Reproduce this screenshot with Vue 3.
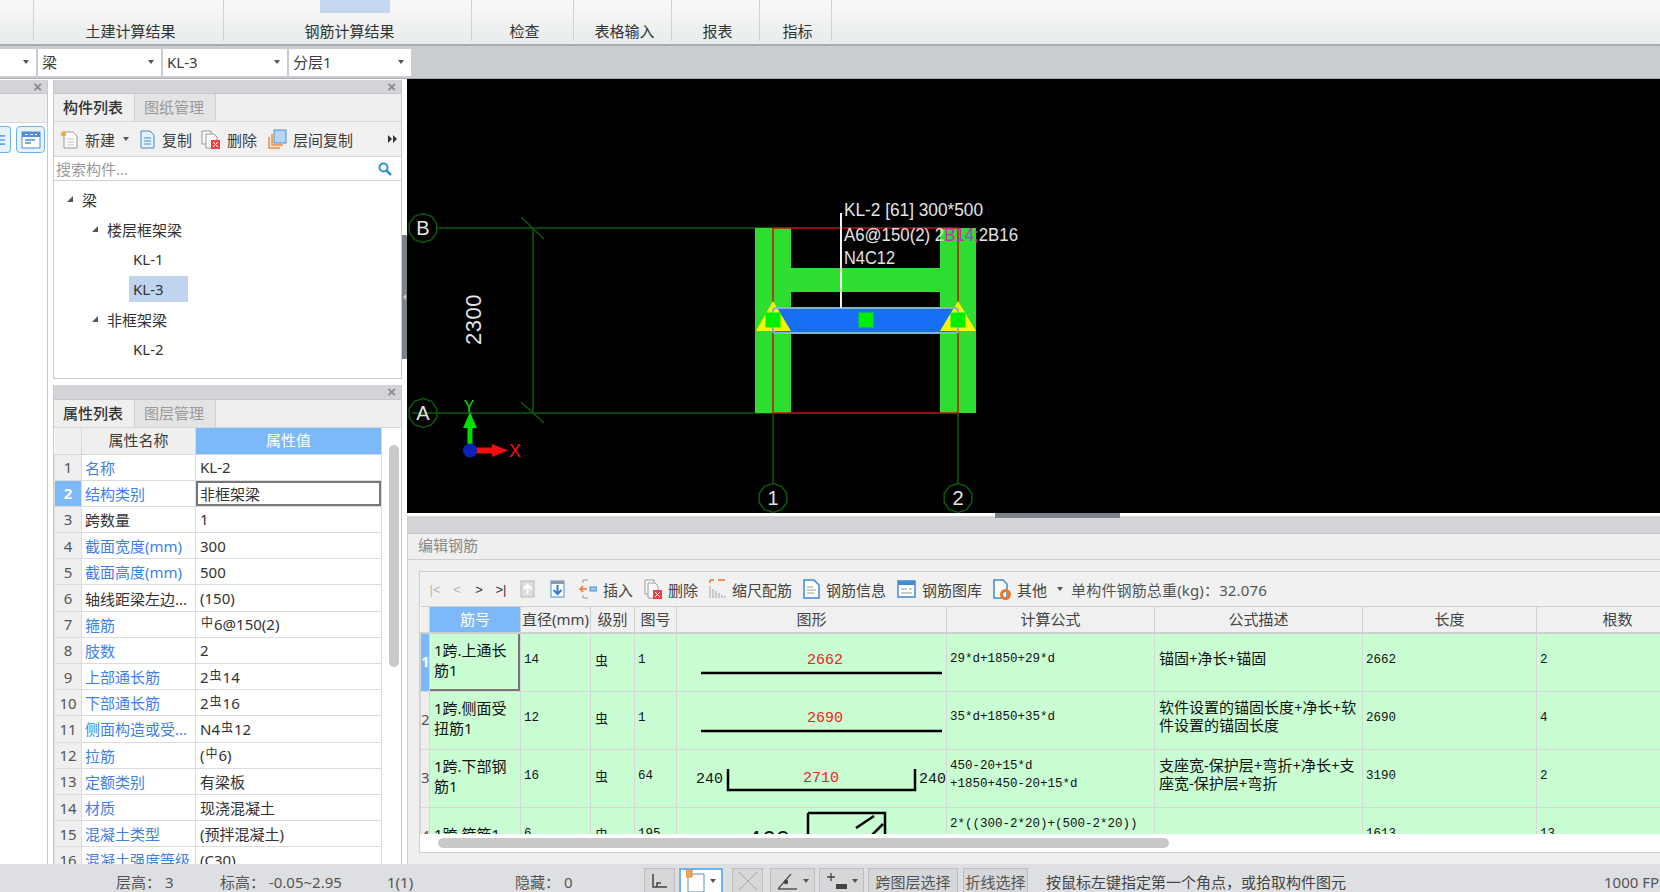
<template>
  <div class="app">
    <div class="ribbon">
      <div v-for="s in ribbon" :key="s.id" class="rib-sec" :style="{ width: s.w + 'px' }">
        <div v-if="s.mark" class="rib-mark"></div>
        <span class="rib-label">{{ s.label }}</span>
      </div>
    </div>

    <div class="selectors">
      <div v-for="d in dropdowns" :key="d.id" class="combo" :style="{ width: d.w + 'px' }">
        <span>{{ d.text }}</span><i class="caret"></i>
      </div>
    </div>

    <div class="main">
      <!-- collapsed left dock -->
      <div class="stub">
        <div class="dock-title"><span class="close">×</span></div>
        <div class="stub-strip"></div>
        <div class="stub-tools">
          <div class="stub-btn cut">
            <svg width="12" height="16" viewBox="0 0 12 16"><path d="M0 3h6M0 8h6M0 13h6" stroke="#5aa6ee" stroke-width="2" fill="none"/></svg>
          </div>
          <div class="stub-btn">
            <svg width="20" height="18" viewBox="0 0 20 18"><rect x="1" y="1" width="18" height="16" fill="#fff" stroke="#4c8fd6"/><rect x="1" y="1" width="18" height="5" fill="#4c8fd6"/><path d="M4 3.500h3M9 3.500h3M14 3.500h2" stroke="#fff"/><path d="M4 9h10M4 12h6" stroke="#4c8fd6" stroke-width="1.500"/></svg>
          </div>
        </div>
      </div>

      <div class="left">
        <section class="panel panel-list">
          <div class="dock-title"><span class="close">×</span></div>
          <div class="tabs">
            <div class="tab on">构件列表</div>
            <div class="tab">图纸管理</div>
          </div>
          <div class="list-tools">
            <div class="tool t-new">
              <svg width="19" height="19" viewBox="0 0 19 19"><path d="M4 2h9l4 4v12H4z" fill="#fbfbfb" stroke="#9a9a9a"/><path d="M7 9h7M7 12h7M7 15h7" stroke="#c8c8c8"/><path d="M3.500 0.500l1 2 2-.5-1 2 1 2-2-.5-1 2-1-2-2 .5 1-2-1-2 2 .5z" fill="#f5a623"/></svg>
              <span>新建</span><i class="caret"></i>
            </div>
            <div class="tool t-copy">
              <svg width="17" height="19" viewBox="0 0 17 19"><path d="M2 1h9l4 4v13H2z" fill="#e7f1fb" stroke="#3f8bd6"/><path d="M5 8h7M5 11h7M5 14h7" stroke="#3f8bd6"/></svg>
              <span>复制</span>
            </div>
            <div class="tool t-del">
              <svg width="20" height="19" viewBox="0 0 20 19"><path d="M1 1h9v13H1z" fill="#fafafa" stroke="#9a9a9a"/><path d="M5 4h8l3 3v11H5z" fill="#fbfbfb" stroke="#9a9a9a"/><rect x="10" y="10" width="9" height="9" fill="#e04646"/><path d="M12 12l5 5M17 12l-5 5" stroke="#fff"/></svg>
              <span>删除</span>
            </div>
            <div class="tool t-floor">
              <svg width="19" height="20" viewBox="0 0 19 20"><rect x="6" y="1" width="12" height="13" fill="#b6d5f7" stroke="#4c8fd6"/><path d="M4 5v11h11M1 8v11h11" fill="none" stroke="#f0883a" stroke-width="1.500"/></svg>
              <span>层间复制</span>
            </div>
            <svg class="more" width="10" height="8" viewBox="0 0 10 8"><path d="M0 0l4 4-4 4zM5 0l4 4-4 4z" fill="#333"/></svg>
          </div>
          <div class="search">
            <span>搜索构件...</span>
            <svg width="14" height="14" viewBox="0 0 14 14"><circle cx="5.500" cy="5.500" r="4" fill="none" stroke="#2f93d1" stroke-width="2"/><path d="M8.500 8.500l4.500 4.500" stroke="#2f93d1" stroke-width="2.500"/></svg>
          </div>
          <ul class="tree">
            <li v-for="n in tree" :key="n.id" class="node" :class="'lv' + n.level">
              <i v-if="n.open" class="open-mark"></i>
              <span :class="{ picked: n.picked }">{{ n.text }}</span>
            </li>
          </ul>
        </section>

        <section class="panel panel-props">
          <div class="dock-title"><span class="close">×</span></div>
          <div class="tabs">
            <div class="tab on">属性列表</div>
            <div class="tab">图层管理</div>
          </div>
          <div class="props-wrap">
            <table class="props">
              <colgroup><col style="width:27px" /><col style="width:114px" /><col style="width:186px" /></colgroup>
              <thead>
                <tr><th></th><th>属性名称</th><th class="hot">属性值</th></tr>
              </thead>
              <tbody>
                <tr v-for="r in props" :key="r.n">
                  <td class="num" :class="{ hot: r.active }">{{ r.n }}</td>
                  <td class="name" :class="{ blue: r.blue }">{{ r.label }}</td>
                  <td class="val" :class="{ editing: r.active }">{{ r.pre }}<span v-if="r.sym" class="sym">{{ r.sym }}</span>{{ r.post }}</td>
                </tr>
              </tbody>
            </table>
            <div class="vscroll"><div class="vthumb"></div></div>
          </div>
        </section>
      </div>

      <div class="vsash">
        <div class="vsash-grip"><i></i></div>
      </div>

      <div class="right">
        <svg class="canvas" width="1253" height="434" viewBox="407 79 1253 434">
          <rect x="407" y="79" width="1253" height="434" fill="#000" />
          <!-- axis lines -->
          <g stroke="#0b5a0b" stroke-width="1.500" fill="none">
            <path d="M437 228H773M412 413H773M773 228V484M958 228V484" />
            <path d="M533 228V413M521 217L544 239M521 402L544 423" />
            <polygon v-for="a in axes" :key="a.t" :points="a.points" />
          </g>
          <!-- columns and beam -->
          <g fill="#2ddd2f">
            <rect x="755" y="228" width="36" height="185" />
            <rect x="940" y="228" width="36" height="185" />
            <rect x="791" y="268" width="149" height="24" />
          </g>
          <rect x="773" y="228" width="185" height="185" fill="none" stroke="#c81212" stroke-width="1.500" />
          <rect x="773" y="308" width="185" height="25" fill="#166ff5" />
          <polygon points="773,301 756,331 791,331" fill="#f5f500" />
          <polygon points="958,301 940,331 976,331" fill="#f5f500" />
          <rect x="773" y="308" width="185" height="25" rx="3" fill="none" stroke="#85aee2" stroke-width="2" />
          <rect x="765.500" y="312.500" width="15" height="15" fill="#00ee00" />
          <rect x="858.500" y="312.500" width="15" height="15" fill="#00ee00" />
          <rect x="950.500" y="312.500" width="15" height="15" fill="#00ee00" />
          <path d="M841 213V308" stroke="#f2f2f2" stroke-width="2" />
          <!-- texts -->
          <g class="cad" fill="#e4e4e4">
            <text x="844" y="216" font-size="18" textLength="139" lengthAdjust="spacingAndGlyphs">KL-2 [61] 300*500</text>
            <text x="844" y="241" font-size="18" textLength="174" lengthAdjust="spacingAndGlyphs">A6@150(2) 2<tspan fill="#d326c8">B14;</tspan>2B16</text>
            <text x="844" y="264" font-size="18" textLength="51" lengthAdjust="spacingAndGlyphs">N4C12</text>
            <text transform="translate(481 345) rotate(-90)" font-size="22" letter-spacing="0.500">2300</text>
            <text v-for="a in axes" :key="a.t" :x="a.x" :y="a.y + 7" font-size="20" text-anchor="middle">{{ a.t }}</text>
          </g>
          <!-- origin gizmo -->
          <path d="M470 450V425" stroke="#00e000" stroke-width="5" />
          <polygon points="470,412 463,428 477,428" fill="#00e000" />
          <path d="M470 450.500H495" stroke="#f01010" stroke-width="6" />
          <polygon points="508,450.500 492,444 492,457" fill="#f01010" />
          <ellipse cx="470" cy="450.500" rx="7" ry="7" fill="#0b22b8" />
          <text class="cad" x="469" y="412" font-size="16" fill="#00e000" text-anchor="middle">Y</text>
          <text class="cad" x="515" y="457" font-size="18" fill="#f01010" text-anchor="middle">X</text>
        </svg>

        <div class="hsash"><div class="hsash-grip"></div></div>

        <section class="edit">
          <div class="edit-title">编辑钢筋</div>
          <div class="edit-body">
            <div class="grid-box">
              <div class="grid-tools">
                <span class="nav off first">|&lt;</span>
                <span class="nav off">&lt;</span>
                <span class="nav">&gt;</span>
                <span class="nav last">&gt;|</span>
                <svg class="t-up" width="15" height="18" viewBox="0 0 15 18"><rect x="1" y="1" width="13" height="16" fill="#ddd" stroke="#b8b8b8"/><path d="M7.500 5v9M3.500 9l4-4 4 4" stroke="#fff" stroke-width="2" fill="none"/></svg>
                <svg class="t-down" width="15" height="18" viewBox="0 0 15 18"><rect x="1" y="1" width="13" height="16" fill="#fff" stroke="#4c8fd6"/><rect x="1" y="1" width="13" height="3" fill="#8a9bb0"/><path d="M7.500 5v9M3.500 10l4 4 4-4" stroke="#2c7fd6" stroke-width="2" fill="none"/></svg>
                <div class="tool t-ins">
                  <svg width="18" height="20" viewBox="0 0 18 20"><path d="M4 1h5M4 1v3M4 19h5M4 19v-3" stroke="#9a9a9a" fill="none"/><path d="M1 10h7M4 7l-3 3 3 3" stroke="#f0762a" stroke-width="1.500" fill="none"/><rect x="11" y="8" width="7" height="4" fill="#9cc6ef" stroke="#4c8fd6"/></svg>
                  <span>插入</span>
                </div>
                <div class="tool">
                  <svg width="18" height="20" viewBox="0 0 18 20"><path d="M1 1h9v14H1z" fill="#fafafa" stroke="#9a9a9a"/><path d="M4 4h7l3 3v12H4z" fill="#fbfbfb" stroke="#9a9a9a"/><rect x="9" y="11" width="9" height="9" fill="#e04646"/><path d="M11 13l5 5M16 13l-5 5" stroke="#fff"/></svg>
                  <span>删除</span>
                </div>
                <div class="tool">
                  <svg width="17" height="20" viewBox="0 0 17 20"><path d="M1 1h4M1 1v3M9 1h7" stroke="#f0762a" stroke-width="1.500" fill="none"/><path d="M1 7v12M4 10v9M7 12v7M10 14v5M13 16v3M16 17v2" stroke="#9aa3ad"/></svg>
                  <span>缩尺配筋</span>
                </div>
                <div class="tool">
                  <svg width="17" height="20" viewBox="0 0 17 20"><path d="M1 1h10l5 5v13H1z" fill="#fff" stroke="#3f8bd6" stroke-width="1.500"/><path d="M4 8h6M4 11h9M4 14h7" stroke="#9a9a9a"/></svg>
                  <span>钢筋信息</span>
                </div>
                <div class="tool">
                  <svg width="19" height="18" viewBox="0 0 19 18"><rect x="1" y="1" width="17" height="16" fill="#fff" stroke="#3f8bd6" stroke-width="1.500"/><rect x="1" y="1" width="17" height="4" fill="#3f8bd6"/><path d="M4 9h6M12 9h3M4 13h11" stroke="#9a9a9a"/></svg>
                  <span>钢筋图库</span>
                </div>
                <div class="tool t-other">
                  <svg width="18" height="21" viewBox="0 0 18 21"><path d="M1 1h9l4 4v14H1z" fill="#fff" stroke="#3f8bd6" stroke-width="1.500"/><circle cx="12.500" cy="15.500" r="4" fill="none" stroke="#f0762a" stroke-width="3"/></svg>
                  <span>其他</span><i class="caret"></i>
                </div>
                <span class="weight">单构件钢筋总重(kg)：32.076</span>
              </div>

              <div class="grid-clip">
                <table class="rebar">
                  <colgroup>
                    <col v-for="c in rebarCols" :key="c.title + c.w" :style="{ width: c.w + 'px' }" />
                  </colgroup>
                  <thead>
                    <tr>
                      <th v-for="(c, i) in rebarCols" :key="i" :class="{ hot: c.hot }">{{ c.title }}</th>
                    </tr>
                  </thead>
                  <tbody>
                    <tr v-for="(r, i) in rebars" :key="r.no">
                      <td class="rno" :class="{ hot: i === 0 }">{{ r.no }}</td>
                      <td class="rname" :class="{ picked: i === 0 }">{{ r.name }}</td>
                      <td class="mono">{{ r.dia }}</td>
                      <td class="grade">虫</td>
                      <td class="mono">{{ r.shape }}</td>
                      <td class="shape">
                        <svg v-if="r.kind === 'bar'" width="270" height="57" viewBox="0 0 270 57">
                          <text x="148" y="30" class="dim red" text-anchor="middle">{{ r.dim }}</text>
                          <path d="M24 39H265" stroke="#000" stroke-width="2.500" />
                        </svg>
                        <svg v-else-if="r.kind === 'hook'" width="270" height="57" viewBox="0 0 270 57">
                          <text x="19" y="33" class="dim">240</text>
                          <path d="M51 19V40H238V19" stroke="#000" stroke-width="2.500" fill="none" />
                          <text x="144" y="32" class="dim red" text-anchor="middle">2710</text>
                          <text x="242" y="33" class="dim">240</text>
                        </svg>
                        <svg v-else width="270" height="57" viewBox="0 0 270 57">
                          <text x="70" y="39" class="dim big">460</text>
                          <path d="M131 5V57M131 5H208V57" stroke="#000" stroke-width="2.500" fill="none" />
                          <path d="M197 8L179 20M206 16L192 30" stroke="#000" stroke-width="2.500" />
                          <text x="155" y="38" class="dim red" text-anchor="middle">260</text>
                        </svg>
                      </td>
                      <td class="mono formula">{{ r.formula }}</td>
                      <td class="desc">{{ r.desc }}</td>
                      <td class="mono">{{ r.len }}</td>
                      <td class="mono">{{ r.count }}</td>
                    </tr>
                  </tbody>
                </table>
              </div>
              <div class="hscroll"><div class="hthumb"></div></div>
            </div>
          </div>
        </section>
      </div>
    </div>

    <div class="status">
      <span class="st st1">层高：&nbsp;3</span>
      <span class="st st2">标高：&nbsp;-0.05~2.95</span>
      <span class="st st3">1(1)</span>
      <span class="st st4">隐藏：&nbsp;0</span>
      <div class="st-btn b1">
        <svg width="18" height="18" viewBox="0 0 18 18"><path d="M2 2V15H16M6 15V11H10" stroke="#444" fill="none" stroke-width="1.500"/></svg>
      </div>
      <div class="st-btn b2">
        <svg width="20" height="22" viewBox="0 0 20 22"><rect x="2" y="4" width="16" height="18" fill="#fff" stroke="#5f8fc2"/><rect x="0" y="0" width="6" height="7" fill="#f6a35a" stroke="#e88b3a"/></svg>
        <i class="caret"></i>
      </div>
      <div class="st-btn b3">
        <svg width="24" height="24" viewBox="0 0 24 24"><path d="M3 3L21 21M21 3L3 21" stroke="#a9a9a9"/></svg>
      </div>
      <div class="st-btn b4">
        <svg width="22" height="20" viewBox="0 0 22 20"><path d="M1 18H20M1 18L14 3" stroke="#555" stroke-width="1.300" fill="none"/><circle cx="9" cy="11" r="2.200" fill="#444"/></svg>
        <i class="caret"></i>
      </div>
      <div class="st-btn b5">
        <svg width="22" height="20" viewBox="0 0 22 20"><path d="M1 6H9M5 2V10" stroke="#444" stroke-width="1.300"/><rect x="10" y="13" width="11" height="5" fill="#444"/></svg>
        <i class="caret"></i>
      </div>
      <div class="st-btn b6">跨图层选择</div>
      <div class="st-btn b7">折线选择</div>
      <span class="st st-hint">按鼠标左键指定第一个角点，或拾取构件图元</span>
      <span class="st st-fps">1000 FPS</span>
    </div>
  </div>
</template>

<script setup>
const ribbon = [
  { id: 0, w: 34, label: '' },
  { id: 1, w: 190, label: '土建计算结果' },
  { id: 2, w: 248, label: '钢筋计算结果', mark: true },
  { id: 3, w: 102, label: '检查' },
  { id: 4, w: 98, label: '表格输入' },
  { id: 5, w: 88, label: '报表' },
  { id: 6, w: 72, label: '指标' }
]

const dropdowns = [
  { id: 0, w: 36, text: '' },
  { id: 1, w: 123, text: '梁' },
  { id: 2, w: 124, text: 'KL-3' },
  { id: 3, w: 122, text: '分层1' }
]

const tree = [
  { id: 1, level: 0, text: '梁', open: true },
  { id: 2, level: 1, text: '楼层框架梁', open: true },
  { id: 3, level: 2, text: 'KL-1' },
  { id: 4, level: 2, text: 'KL-3', picked: true },
  { id: 5, level: 1, text: '非框架梁', open: true },
  { id: 6, level: 2, text: 'KL-2' }
]

const props = [
  { n: 1, label: '名称', blue: true, pre: 'KL-2' },
  { n: 2, label: '结构类别', blue: true, pre: '非框架梁', active: true },
  { n: 3, label: '跨数量', pre: '1' },
  { n: 4, label: '截面宽度(mm)', blue: true, pre: '300' },
  { n: 5, label: '截面高度(mm)', blue: true, pre: '500' },
  { n: 6, label: '轴线距梁左边...', pre: '(150)' },
  { n: 7, label: '箍筋', blue: true, pre: '', sym: '中', post: '6@150(2)' },
  { n: 8, label: '肢数', blue: true, pre: '2' },
  { n: 9, label: '上部通长筋', blue: true, pre: '2', sym: '虫', post: '14' },
  { n: 10, label: '下部通长筋', blue: true, pre: '2', sym: '虫', post: '16' },
  { n: 11, label: '侧面构造或受...', blue: true, pre: 'N4', sym: '虫', post: '12' },
  { n: 12, label: '拉筋', blue: true, pre: '(', sym: '中', post: '6)' },
  { n: 13, label: '定额类别', blue: true, pre: '有梁板' },
  { n: 14, label: '材质', blue: true, pre: '现浇混凝土' },
  { n: 15, label: '混凝土类型', blue: true, pre: '(预拌混凝土)' },
  { n: 16, label: '混凝土强度等级', blue: true, pre: '(C30)' }
]

const rebarCols = [
  { title: '', w: 9 },
  { title: '筋号', w: 91, hot: true },
  { title: '直径(mm)', w: 70 },
  { title: '级别', w: 44 },
  { title: '图号', w: 42 },
  { title: '图形', w: 270 },
  { title: '计算公式', w: 208 },
  { title: '公式描述', w: 208 },
  { title: '长度', w: 174 },
  { title: '根数', w: 162 }
]

const rebars = [
  { no: 1, name: '1跨.上通长\n筋1', dia: 14, shape: 1, kind: 'bar', dim: 2662, formula: '29*d+1850+29*d', desc: '锚固+净长+锚固', len: 2662, count: 2 },
  { no: 2, name: '1跨.侧面受\n扭筋1', dia: 12, shape: 1, kind: 'bar', dim: 2690, formula: '35*d+1850+35*d', desc: '软件设置的锚固长度+净长+软\n件设置的锚固长度', len: 2690, count: 4 },
  { no: 3, name: '1跨.下部钢\n筋1', dia: 16, shape: 64, kind: 'hook', formula: '450-20+15*d\n+1850+450-20+15*d', desc: '支座宽-保护层+弯折+净长+支\n座宽-保护层+弯折', len: 3190, count: 2 },
  { no: 4, name: '1跨.箍筋1', dia: 6, shape: 195, kind: 'stirrup', formula: '2*((300-2*20)+(500-2*20))\n+2*(11.9*d)', desc: '', len: 1613, count: 13 }
]

// grid axis bubbles on the drawing
function octagon(cx, cy, r) {
  const pts = []
  for (let i = 0; i < 10; i++) {
    const a = (Math.PI * 2 * i) / 10 + Math.PI / 10
    pts.push((cx + r * Math.cos(a)).toFixed(1) + ',' + (cy + r * Math.sin(a)).toFixed(1))
  }
  return pts.join(' ')
}

const axes = [
  { t: 'B', x: 423, y: 228 },
  { t: 'A', x: 423, y: 413 },
  { t: '1', x: 773, y: 498 },
  { t: '2', x: 958, y: 498 }
].map((a) => ({ ...a, points: octagon(a.x, a.y, 14.5) }))
</script>

<style>
html, body { margin: 0; padding: 0; overflow: hidden; background: #fff; }
</style>

<style scoped>
.app {
  width: 1660px;
  height: 892px;
  display: flex;
  flex-direction: column;
  overflow: hidden;
  background: #fff;
  color: #3c3c3c;
  font-family: "Noto Sans", "Noto Sans CJK SC", sans-serif;
  font-size: 15px;
}
.app * { box-sizing: border-box; }
.caret {
  display: inline-block;
  width: 0;
  height: 0;
  border-left: 3.500px solid transparent;
  border-right: 3.500px solid transparent;
  border-top: 4px solid #555;
}

/* ribbon */
.ribbon {
  height: 46px;
  flex: none;
  display: flex;
  background: linear-gradient(#f8f8f8, #e8ecec);
  border-bottom: 2px solid #a8acb0;
}
.rib-sec {
  position: relative;
  height: 41px;
  border-right: 1px solid #cfd2d2;
  padding-left: 4px;
  display: flex;
  flex-direction: column;
  align-items: center;
  justify-content: flex-end;
}
.rib-mark {
  width: 70px;
  height: 13px;
  margin: 0 0 auto 10px;
  background: #c5d8f0;
}
.rib-label { line-height: 22px; margin-bottom: -1px; color: #333; }

/* selector row */
.selectors {
  height: 33px;
  flex: none;
  padding-top: 3px;
  display: flex;
  gap: 2px;
  background: #c9ccd1;
  border-bottom: 1px solid #a8acb0;
}
.combo {
  height: 27px;
  padding: 0 7px 2px 4px;
  background: #fff;
  display: flex;
  align-items: center;
  justify-content: space-between;
}

.main { flex: 1; min-height: 0; display: flex; }

/* docks */
.dock-title {
  height: 14px;
  background: #d2d4d8;
  display: flex;
  align-items: center;
  justify-content: flex-end;
  padding-right: 5px;
  border-bottom: 1px solid #c4c6ca;
}
.panel-props .dock-title { height: 15px; }
.close { font-family: "Liberation Sans", sans-serif; font-size: 15px; line-height: 14px; font-weight: bold; color: #888; }
.stub {
  width: 48px;
  margin-right: 6px;
  flex: none;
  border-right: 1px solid #c9c9c9;
  margin-top: 1px;
}
.stub-strip { height: 29px; background: #efefef; border-bottom: 1px solid #d9d9d9; }
.stub-tools { display: flex; justify-content: space-between; padding: 3px 2px 0 0; }
.stub-btn {
  width: 29px;
  height: 27px;
  border: 1px solid #6db2f0;
  border-radius: 4px;
  background: #e8f2fc;
  display: flex;
  align-items: center;
  justify-content: center;
}
.stub-btn.cut { width: 11px; border-left: 0; border-radius: 0 4px 4px 0; overflow: hidden; }
.left { width: 349px; flex: none; margin-left: -1px; display: flex; flex-direction: column; margin-top: 1px; }
.panel { border: 1px solid #c8c8c8; border-top: 0; background: #fff; }
.panel-list { height: 299px; margin-bottom: 6px; flex: none; }
.panel-props { flex: 1; min-height: 0; overflow: hidden; border-bottom: 0; }
.tabs { height: 28px; display: flex; background: #efefef; border-bottom: 1px solid #d6d6d6; }
.tab {
  width: 81px;
  display: flex;
  align-items: center;
  justify-content: center;
  padding: 0 2px 2px 0;
  background: #e4e4e4;
  color: #9a9a9a;
  border-right: 1px solid #d0d0d0;
}
.tab.on { background: #efefef; color: #333; font-weight: 500; }
.list-tools {
  height: 35px;
  display: flex;
  align-items: center;
  background: #f1f1f1;
  border-bottom: 1px solid #d6d6d6;
  padding-left: 6px;
}
.tool { display: flex; align-items: center; gap: 6px; }
.t-new .caret { margin-left: 2px; }
.t-copy { margin-left: 10px; }
.t-del { margin-left: 9px; }
.t-floor { margin-left: 11px; }
.more { margin-left: auto; margin-right: 3px; }
.search {
  height: 24px;
  display: flex;
  align-items: center;
  justify-content: space-between;
  padding: 0 9px 0 2px;
  color: #9a9a9a;
  border-bottom: 1px solid #d0d0d0;
}
.tree { list-style: none; margin: 0; padding: 3px 0 0; }
.node { height: 30px; display: flex; align-items: center; position: relative; color: #333; }
.lv0 { padding-left: 28px; }
.lv1 { padding-left: 53px; }
.lv2 { padding-left: 75px; }
.node .picked { background: #bfd4ef; padding: 0 24px 0 4px; line-height: 26px; }
.node span:not(.picked) { margin-left: 4px; }
.lv0 span:not(.picked), .lv1 span:not(.picked) { margin-left: 0; }
.open-mark {
  position: absolute;
  width: 0;
  height: 0;
  margin-left: -15px;
  border-bottom: 6px solid #555;
  border-left: 6px solid transparent;
}

/* property table */
.props-wrap { display: flex; height: 436px; overflow: hidden; }
table { border-collapse: collapse; table-layout: fixed; }
.props { width: 327px; height: 0; flex: none; }
.props th {
  height: 26px;
  padding: 0 0 2px;
  background: #efefef;
  font-weight: 400;
  border-right: 1px solid #d8d8d8;
  border-bottom: 1px solid #d8d8d8;
}
.props th.hot, .rebar th.hot { background: #7db9f9; color: #fff; }
.props td {
  height: 26.200px;
  padding: 0;
  border: 1px solid #dcdcdc;
  white-space: nowrap;
  overflow: hidden;
}
.props .num { background: #efefef; text-align: center; color: #555; }
.props .num.hot { background: #7db9f9; color: #fff; font-weight: bold; }
.name { padding-left: 3px !important; color: #333; }
.name.blue { color: #3f7fe8; }
.val { padding-left: 4px !important; color: #333; }
.val.editing { box-shadow: inset 0 0 0 2px #777; }
.sym { font-size: 12px; position: relative; top: -3px; margin: 0 1px; }
.vscroll { flex: 1; position: relative; padding: 17px 0 0 7px; }
.vthumb { width: 10px; height: 222px; border-radius: 5px; background: #c9c9c9; }

/* sash between docks and drawing */
.vsash { width: 5px; flex: none; padding-top: 156px; }
.vsash-grip {
  height: 124px;
  background: #7c8289;
  display: flex;
  align-items: center;
  justify-content: center;
}
.vsash-grip i { border-right: 3px solid #ccc; border-top: 3px solid transparent; border-bottom: 3px solid transparent; }

.right { flex: 1; min-width: 0; display: flex; flex-direction: column; }
.canvas { display: block; flex: none; }
.cad { font-family: "Liberation Sans", sans-serif; }
.hsash {
  height: 20px;
  flex: none;
  background: linear-gradient(#fff 3px, #d2d4d8 3px);
}
.hsash-grip { width: 125px; height: 5px; margin-left: 588px; background: #7c8289; }

/* rebar editor */
.edit { flex: 1; min-height: 0; display: flex; flex-direction: column; border-left: 1px solid #d0d0d0; }
.edit-title {
  height: 27px;
  flex: none;
  border-top: 1px solid #c8c8c8;
  border-bottom: 1px solid #d0d0d0;
  background: #efefef;
  color: #888;
  padding-left: 10px;
  line-height: 22px;
}
.edit-body { flex: 1; min-height: 0; background: #efefef; padding: 11px 0 11px 11px; }
.grid-box {
  height: 282px;
  border: 1px solid #cfcfcf;
  border-right: 0;
  background: #fff;
  display: flex;
  flex-direction: column;
}
.grid-tools {
  height: 34px;
  flex: none;
  display: flex;
  align-items: center;
  background: #f1f1f1;
  padding-left: 9px;
  color: #444;
}
.nav {
  font-family: "Liberation Sans", sans-serif;
  font-size: 13px;
  width: 12px;
  margin-right: 10px;
  text-align: center;
  color: #333;
}
.nav.off { color: #b5b5b5; }
.nav.last { margin-right: 13px; }
.t-up { margin-right: 15px; }
.t-down { margin-right: 14px; }
.grid-tools .tool { margin-right: 11px; }
.grid-tools .tool .caret { margin: 0 4px; }
.grid-tools .tool.t-other { margin-right: 4px; }
.weight { color: #555; letter-spacing: 0.150px; }
.grid-clip { flex: 1; min-height: 0; overflow: hidden; }
.rebar { width: 1278px; }
.rebar th {
  height: 26px;
  padding: 0 0 2px;
  background: #f0f0f0;
  font-weight: 400;
  border-top: 1px solid #d0d0d0;
  border-right: 1px solid #d0d0d0;
  border-bottom: 2px solid #cfcfcf;
  color: #444;
}
.rebar td {
  height: 57.300px;
  padding: 0 0 4px 3px;
  background: #c9fed3;
  border: 1px solid #d7d7d7;
  color: #111;
  white-space: pre-line;
  line-height: 18px;
  overflow: hidden;
}
.rebar td.rno { padding: 0 0 3px; background: #eee; text-align: center; color: #555; }
.rebar td.rno.hot { background: #7db9f9; color: #fff; font-weight: bold; }
.rebar td.picked { box-shadow: inset -2px -2px 0 #777; background: #c9fed3; }
.rebar td.rname { padding-left: 4px; line-height: 20px; }
.rebar td.mono { font-family: "Liberation Mono", monospace; font-size: 12.500px; }
.rebar td.formula { padding-bottom: 6px; }
.rebar td.grade { padding-left: 4px; font-size: 13px; }
.rebar td.shape { padding: 0; }
.rebar td.shape svg { display: block; }
.rebar td.desc { padding: 0 0 8px 4px; }
.dim { font-family: "Liberation Mono", monospace; font-size: 15px; fill: #111; }
.dim.red { fill: #ee2222; }
.dim.big { font-size: 24px; }
.hscroll { height: 18px; flex: none; padding: 4px 0 0 18px; }
.hthumb { width: 731px; height: 10px; border-radius: 5px; background: #c9c9c9; }

/* status bar */
.status {
  height: 28px;
  flex: none;
  background: #dedfe2;
  display: flex;
  align-items: flex-start;
  color: #555;
  overflow: hidden;
  padding-left: 116px;
  white-space: nowrap;
}
.st { line-height: 28px; margin-top: 4px; flex: none; }
.st1 { width: 104px; }
.st2 { width: 167px; }
.st3 { width: 128px; }
.st4 { width: 129px; }
.st-hint { margin-left: 18px; color: #444; width: 558px; }
.st-btn {
  height: 30px;
  margin-top: 4px;
  flex: none;
  background: #d6d7d9;
  border: 1px solid #bdbdbd;
  display: flex;
  align-items: center;
  justify-content: center;
  gap: 4px;
  padding-bottom: 4px;
}
.b1 { width: 31px; margin-right: 4px; }
.b2 { width: 44px; margin-right: 9px; background: #fff; border: 2px solid #6db2f0; }
.b3 { width: 31px; margin-right: 7px; }
.b4 { width: 45px; margin-right: 4px; }
.b5 { width: 45px; margin-right: 4px; }
.b6 { width: 90px; margin-right: 5px; }
.b7 { width: 65px; }
</style>
